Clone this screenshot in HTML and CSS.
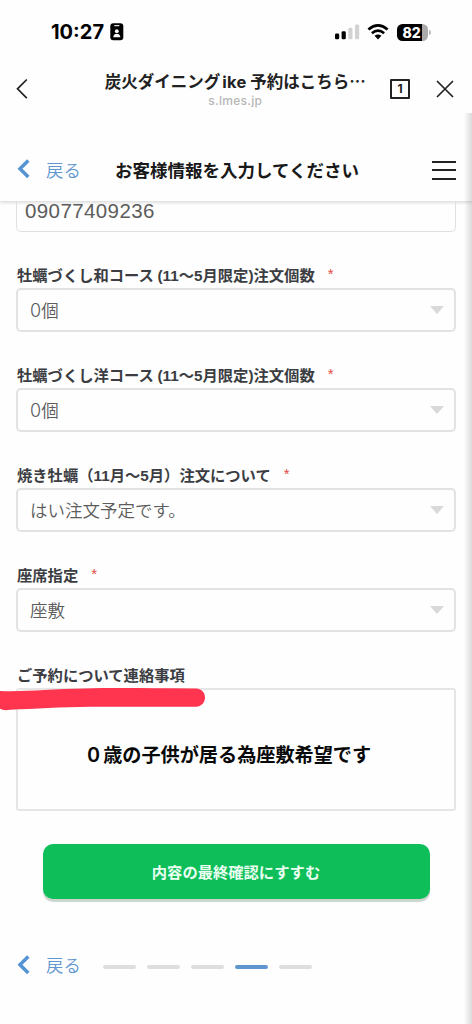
FILE: index.html
```html
<!DOCTYPE html>
<html lang="ja">
<head>
<meta charset="utf-8">
<title>炭火ダイニングike 予約はこちら</title>
<link rel="stylesheet" href="styles.css">
</head>
<body>
<div class="screen">
  <div class="status">
    <span class="clock">10:27</span>
    <svg class="id-icon" width="14" height="18" viewBox="0 0 14 18"><rect x=".3" y=".3" width="13" height="17" rx="3"/><path d="M4.7 2.6h4.2" stroke="#ddd" stroke-width="1.2" stroke-linecap="round"/><circle cx="6.8" cy="8.2" r="1.9" fill="#fff"/><path d="M3.3 14.2c0-4.5 7-4.5 7 0z" fill="#fff"/></svg>
    <svg class="signal" width="25" height="16" viewBox="0 0 25 16"><rect x="0" y="9.5" width="4.2" height="5.8" rx="1.3"/><rect x="6.6" y="7.2" width="4.2" height="8.1" rx="1.3"/><g fill="#d2d2d2"><rect x="13.3" y="3.7" width="4.2" height="11.6" rx="1.3"/><rect x="20" y=".4" width="4.2" height="14.9" rx="1.3"/></g></svg>
    <svg class="wifi" width="22" height="16" viewBox="0 0 22 16"><g fill="none" stroke="#000" stroke-width="2.7"><path d="M1.4 5.5Q11-2.6 20.6 5.5"/><path d="M4.9 9.2Q11 4 17.1 9.2"/></g><path d="M7.5 11.8Q11 9 14.5 11.8L11 15.4z"/></svg>
    <div class="battery"><div class="cell">82</div><i class="tip"></i></div>
  </div>

  <header class="browser-bar">
    <svg class="back" width="12" height="22" viewBox="0 0 12 22"><path d="M10.8 1.5L1.5 10.8l9.3 9.3" fill="none" stroke="#222" stroke-width="1.7"/></svg>
    <div class="browser-title">
      <div class="name">炭火ダイニング<span class="latin">ike</span> 予約はこちら…</div>
      <div class="host">s.lmes.jp</div>
    </div>
    <div class="tabs">1</div>
    <svg class="close" width="18" height="18" viewBox="0 0 18 18"><path d="M1 1l16 16M17 1L1 17" stroke="#222" stroke-width="1.7"/></svg>
  </header>

  <main class="page">
    <div class="page-head">
      <svg class="chev" width="13" height="20" viewBox="0 0 13 20"><path d="M11.3 1.5L3 9.8l8.3 8.3" fill="none" stroke="#5594d3" stroke-width="3.5"/></svg>
      <span class="back-text">戻る</span>
      <h1 class="page-title">お客様情報を入力してください</h1>
      <div class="menu"><i></i><i></i><i></i></div>
    </div>

    <form class="form">
      <div class="phone">09077409236</div>
      <div class="field">
        <div class="label">牡蠣づくし和コース <span class="ascii">(11</span>〜<span class="ascii">5</span>月限定<span class="ascii">)</span>注文個数<b>*</b></div>
        <div class="select"><span><span class="zero">0</span>個</span><i></i></div>
      </div>
      <div class="field">
        <div class="label">牡蠣づくし洋コース <span class="ascii">(11</span>〜<span class="ascii">5</span>月限定<span class="ascii">)</span>注文個数<b>*</b></div>
        <div class="select"><span><span class="zero">0</span>個</span><i></i></div>
      </div>
      <div class="field">
        <div class="label">焼き牡蠣（<span class="ascii">11</span>月〜<span class="ascii">5</span>月）注文について<b>*</b></div>
        <div class="select"><span>はい注文予定です。</span><i></i></div>
      </div>
      <div class="field">
        <div class="label">座席指定<b>*</b></div>
        <div class="select"><span>座敷</span><i></i></div>
      </div>
      <div class="field notes">
        <div class="label">ご予約について連絡事項</div>
        <div class="textarea">０歳の子供が居る為座敷希望です</div>
        <svg class="marker" width="210" height="26" viewBox="0 0 210 26"><path d="M0 5C25 6 50 3 85 2.5C120 1.5 160 2.6 196 2.5C208 3 208 20 196 20.7L90 20.8C60 21 35 23 10 23.7Q4 25 0 22.8z" fill="#ff344f"/></svg>
      </div>
      <div class="submit">内容の最終確認にすすむ</div>
    </form>

    <div class="foot">
      <svg class="chev" width="13" height="20" viewBox="0 0 13 20"><path d="M11.3 1.5L3 9.8l8.3 8.3" fill="none" stroke="#5594d3" stroke-width="3.5"/></svg>
      <span class="back-text">戻る</span>
      <div class="steps"><i></i><i></i><i></i><i class="on"></i><i></i></div>
    </div>
  </main>
</div>
</body>
</html>
```
FILE: styles.css
```css
* { box-sizing: border-box; }
body { margin: 0; background: #fefefe; font-family: "Noto Sans CJK JP", sans-serif; color: #222; }
.screen { width: 472px; height: 1024px; overflow: hidden; display: flex; flex-direction: column; white-space: nowrap; }
i { display: block; }
svg { flex: none; display: block; }

.status { height: 64px; display: flex; align-items: center; padding-left: 51px; }
.clock { width: 59px; font: 700 20px/24px Inter, sans-serif; color: #000; }
.signal { margin-left: 211px; }
.wifi { margin-left: 7px; }
.battery { display: flex; align-items: center; margin-left: 8px; }
.cell { width: 31px; height: 17px; padding-right: 2px; border-radius: 5.5px; background: linear-gradient(90deg, #000 82%, #aaa 82%); color: #fff; font: 800 14px/17px Inter, sans-serif; letter-spacing: -.2px; text-align: center; }
.tip { width: 2px; height: 5px; margin-left: 1px; border-radius: 0 2px 2px 0; background: #bbb; }

.browser-bar { height: 49px; display: flex; align-items: flex-start; padding: 7px 18px 0 16px; }
.back { margin-top: 7px; }
.browser-title { width: 264px; margin-left: 76px; margin-top: -1px; text-align: center; }
.name { font-size: 16.5px; font-weight: 700; line-height: 22px; }
.name .latin { margin-left: 2px; font-family: Inter, sans-serif; letter-spacing: .2px; }
.host { font: 500 12px/15px Inter, sans-serif; letter-spacing: .3px; color: #b7b7b7; }
.tabs { width: 20px; height: 20px; margin: 8px 0 0 23.5px; border: 2px solid #222; border-radius: 1px; font: 700 12px/16px Inter, sans-serif; text-align: center; }
.close { margin: 9px 0 0 26px; }

.page { height: 911px; background: linear-gradient(90deg, rgba(0,0,0,0) 464px, rgba(0,0,0,.14) 472px); }
.page-head { height: 88px; display: flex; align-items: center; padding: 25px 16px 0 17px; box-shadow: 0 2px 3px rgba(0,0,0,.13); }
.chev { margin-top: -3px; }
.page-head .chev { margin-top: -1px; }
.back-text { width: 69px; padding-left: 16px; margin-right: 16px; font-size: 17.4px; line-height: 26px; font-weight: 350; color: #6297cf; }
.page-title { margin: 0; width: 262px; font-size: 17.5px; line-height: 26px; font-weight: 600; color: #181818; }
.menu { width: 24px; margin: 1px 0 0 auto; display: grid; gap: 6.5px; }
.menu i { height: 2px; background: #222; }

.form { padding: 0 16px; }
.phone { height: 31px; padding-left: 8px; border: 1.5px solid #e0e0e0; border-top: 0; border-radius: 0 0 5px 5px; font: 400 20.5px/20px "Liberation Sans", sans-serif; letter-spacing: .4px; color: #5c5c5c; }
.field { margin-top: 30px; }
.label { height: 26px; padding-left: 1px; font-size: 15.3px; line-height: 24px; font-weight: 700; color: #3b3d42; }
.ascii { font-family: "Liberation Sans", sans-serif; }
.label b { margin-left: 13px; font: 400 15px/20px "Liberation Sans", sans-serif; vertical-align: 2px; color: #e34b42; }
.select { width: 440px; height: 44px; display: flex; align-items: center; justify-content: space-between; padding: 0 10px 0 12px; border: 2px solid #e2e2e2; border-radius: 5px; font-size: 17.5px; font-weight: 350; line-height: 26px; color: #5c5c5c; }
.select i { width: 0; border: 7.5px solid transparent; border-top: 8px solid #d9d9d9; border-bottom: 0; }
.zero { font-family: Inter, sans-serif; font-size: 18px; }
.notes { position: relative; }
.textarea { width: 440px; height: 123px; display: flex; align-items: center; padding: 8px 0 0 66px; border: 2px solid #e5e5e5; border-radius: 3px; font-size: 19.15px; font-weight: 700; color: #090909; }
.marker { position: absolute; left: -16px; top: 24px; }
.submit { width: 387px; height: 55px; margin: 33px 0 0 26.5px; border-radius: 10px; background: #0dbe59; box-shadow: 0 3px 1px #cbd5ce; color: #e9fff0; font-size: 15.3px; font-weight: 600; line-height: 54px; text-align: center; }

.foot { display: flex; align-items: center; margin-top: 52px; padding-left: 17px; height: 28px; }
.foot .back-text { margin-right: 4px; }
.foot .chev { margin-top: -1px; }
.steps { display: flex; gap: 11px; padding-top: 3px; }
.steps i { width: 33px; height: 4px; border-radius: 2px; background: #dedede; }
.steps .on { background: #6096d0; }
```
